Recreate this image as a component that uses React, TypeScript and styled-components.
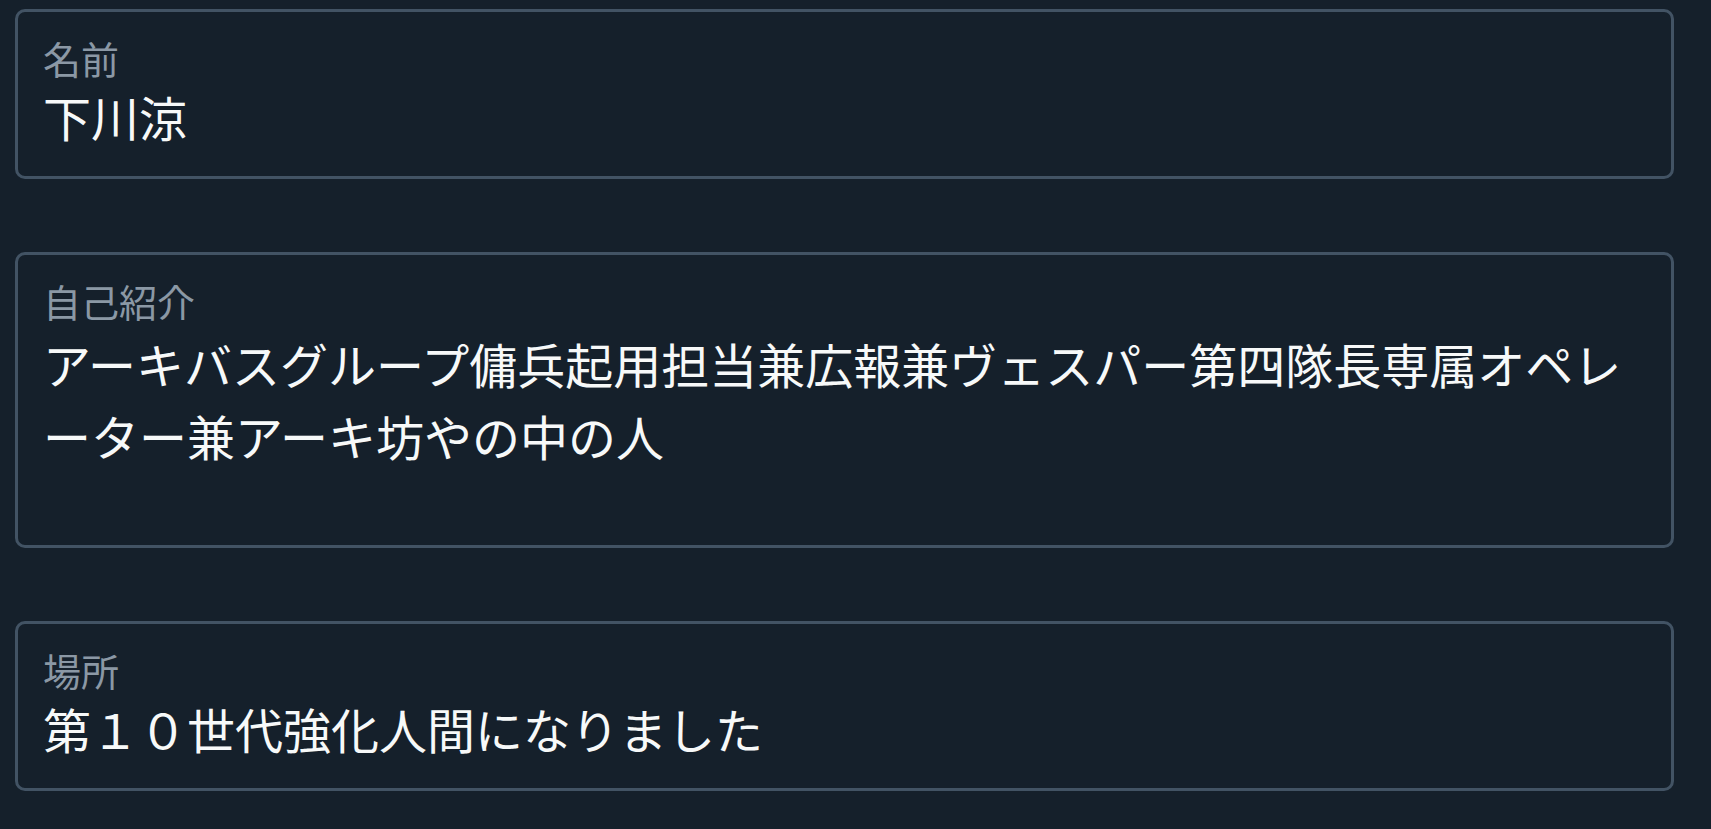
import React from "react";
import styled, { createGlobalStyle } from "styled-components";

const GlobalStyle = createGlobalStyle`
  html, body {
    margin: 0;
    padding: 0;
    background: #15202b;
  }
  body {
    min-height: 829px;
    font-family: "Noto Sans CJK JP", "Noto Sans", sans-serif;
  }
`;

const Page = styled.div`
  display: flex;
  flex-direction: column;
  gap: 73px;
  padding: 9px 37px 36px 15px;
  background: #15202b;
  min-height: 829px;
  box-sizing: border-box;
`;

const Field = styled.div<{ $bottom: number }>`
  display: flex;
  flex-direction: column;
  border: 3px solid #425364;
  border-radius: 10px;
  padding: 24px 25px ${(p) => p.$bottom}px 25px;
`;

const Label = styled.div`
  color: #8b98a5;
  font-size: 38px;
  line-height: 44px;
  white-space: nowrap;
`;

const Value = styled.div<{ $rows: number; $gap: number }>`
  color: #f7f9f9;
  font-size: 48px;
  line-height: 72px;
  margin-top: ${(p) => p.$gap}px;
  min-height: ${(p) => p.$rows * 72}px;
  word-break: break-all;
`;

type FieldProps = {
  label: string;
  value: string;
  rows?: number;
};

function TextField({ label, value, rows = 1 }: FieldProps) {
  const multi = rows > 1;
  return (
    <Field $bottom={multi ? 2 : 24}>
      <Label>{label}</Label>
      <Value $rows={rows} $gap={multi ? 4 : 0}>
        {value}
      </Value>
    </Field>
  );
}

export default function App() {
  return (
    <>
      <GlobalStyle />
      <Page>
        <TextField label="名前" value="下川涼" />
        <TextField
          label="自己紹介"
          value="アーキバスグループ傭兵起用担当兼広報兼ヴェスパー第四隊長専属オペレーター兼アーキ坊やの中の人"
          rows={3}
        />
        <TextField label="場所" value="第１０世代強化人間になりました" />
      </Page>
    </>
  );
}
